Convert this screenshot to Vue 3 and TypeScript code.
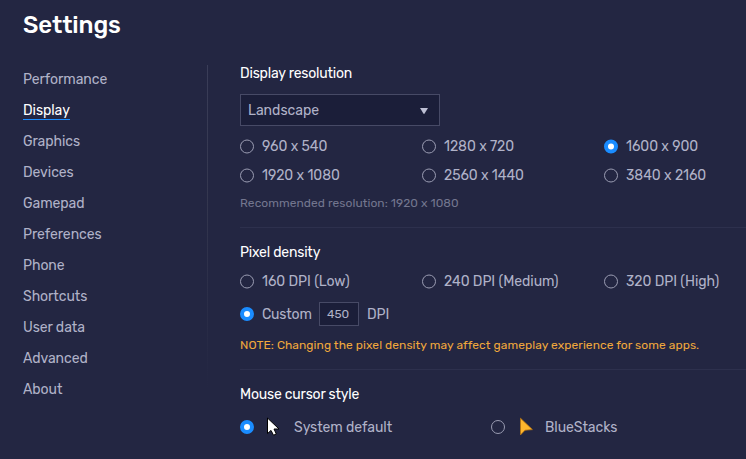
<script setup lang="ts">
interface Choice {
  label: string
  checked?: boolean
}

const active = 'Display'
const nav: string[] = [
  'Performance',
  'Display',
  'Graphics',
  'Devices',
  'Gamepad',
  'Preferences',
  'Phone',
  'Shortcuts',
  'User data',
  'Advanced',
  'About',
]

const resolutions: Choice[] = [
  { label: '960 x 540' },
  { label: '1280 x 720' },
  { label: '1600 x 900', checked: true },
  { label: '1920 x 1080' },
  { label: '2560 x 1440' },
  { label: '3840 x 2160' },
]

const densities: Choice[] = [
  { label: '160 DPI (Low)' },
  { label: '240 DPI (Medium)' },
  { label: '320 DPI (High)' },
]
</script>

<template>
  <div class="settings">
    <h1>Settings</h1>
    <div class="body">
      <nav>
        <div v-for="n in nav" :key="n" class="nav-row">
          <span :class="['nav-link', { active: n === active }]">{{ n }}</span>
        </div>
      </nav>
      <main>
        <section class="resolution">
          <h2>Display resolution</h2>
          <div class="select">
            <span class="text">Landscape</span>
            <svg width="8" height="6" viewBox="0 0 8 6"><path d="M0 0H8L4.6 5.6Q4 6.4 3.4 5.6Z" /></svg>
          </div>
          <div class="grid">
            <div v-for="r in resolutions" :key="r.label" class="option">
              <i :class="['radio', { on: r.checked }]"></i>
              <span>{{ r.label }}</span>
            </div>
          </div>
          <p class="hint">Recommended resolution: 1920 x 1080</p>
        </section>
        <section class="density">
          <h2>Pixel density</h2>
          <div class="grid">
            <div v-for="d in densities" :key="d.label" class="option">
              <i class="radio"></i>
              <span>{{ d.label }}</span>
            </div>
          </div>
          <div class="option custom">
            <i class="radio on"></i>
            <span class="custom-label text">Custom</span>
            <span class="field">450</span>
            <span class="text">DPI</span>
          </div>
          <p class="note">NOTE: Changing the pixel density may affect gameplay experience for some apps.</p>
        </section>
        <section class="mouse">
          <h2>Mouse cursor style</h2>
          <div class="cursors">
            <div class="option">
              <i class="radio on"></i>
              <svg class="cursor" width="14" height="20" viewBox="0 0 14 20">
                <path d="M.5 1V16.6L4 13.4L6.5 18.2L9.3 17L7 12H12Z" fill="#fff" stroke="#000" />
              </svg>
              <span>System default</span>
            </div>
            <div class="option">
              <i class="radio"></i>
              <svg class="cursor bs" width="14" height="20" viewBox="0 0 14 20">
                <path d="M.5 1.2V17.9L5 13.2L12.4 12.6Z" fill="#ffb62d" stroke="#b87512" stroke-width=".8" />
              </svg>
              <span>BlueStacks</span>
            </div>
          </div>
        </section>
      </main>
    </div>
  </div>
</template>

<style>
body { margin: 0; background: #232642; }
</style>

<style scoped>
.settings {
  box-sizing: border-box;
  width: 746px;
  height: 459px;
  overflow: hidden;
  background: #232642;
  color: #b0b2c8;
  font: 14px/20px Rubik, Roboto, sans-serif;
  letter-spacing: -0.06px;
  white-space: nowrap;
}
h1, h2, p { margin: 0; font-weight: 400; }
h1 {
  height: 64px;
  padding: 9px 0 0 23px;
  box-sizing: border-box;
  font-size: 24px;
  line-height: 32px;
  font-weight: 500;
  letter-spacing: -0.12px;
  color: #fff;
}
.body { display: flex; }
nav {
  box-sizing: border-box;
  width: 208px;
  height: 342px;
  padding-left: 23px;
  background: linear-gradient(#3a3d58, #34374f 40%, #232642) right 1px / 1px 322px no-repeat;
}
.nav-row { height: 31px; display: flex; align-items: center; }
.nav-link { line-height: 17px; padding-top: 1px; border-bottom: 1px solid transparent; }
.nav-link.active { color: #fff; border-color: #1a8cff; }
main { flex: 1; padding-left: 32px; min-width: 0; }
section { box-sizing: border-box; }
h2 { font-size: 14px; line-height: 20px; color: #fff; letter-spacing: -0.2px; }
.resolution { height: 164px; border-bottom: 1px solid #2d304d; }
.density { height: 142px; padding-top: 15px; border-bottom: 1px solid #2d304d; }
.mouse { padding-top: 15px; }
.text { padding-top: 2px; }
.select {
  box-sizing: border-box;
  display: flex;
  align-items: center;
  justify-content: space-between;
  width: 200px;
  height: 32px;
  margin-top: 10px;
  padding: 0 11px 0 7px;
  border: 1px solid #474a66;
  background: #1b1e39;
  letter-spacing: 0;
}
.select svg { margin-top: 2px; fill: #bdbfd4; }
.grid { display: grid; grid-template-columns: repeat(3, 182px); grid-auto-rows: 29px; }
.resolution .grid { margin-top: 6px; }
.density .grid { margin-top: 4px; }
.grid span { line-height: 19px; }
.option { display: flex; align-items: center; }
.radio {
  box-sizing: border-box;
  flex: none;
  width: 14px;
  height: 14px;
  margin-right: 8px;
  border: 1px solid #9a9cb2;
  border-radius: 50%;
}
.grid .radio { margin-bottom: 1px; transform: translateY(0.5px); }
.radio.on { border: 4px solid #1a8cff; background: #fff; }
.hint { margin-top: 3px; font-size: 12px; line-height: 20px; color: #73768f; letter-spacing: 0.06px; }
.custom { height: 36px; }
.field {
  box-sizing: border-box;
  width: 40px;
  height: 24px;
  margin: 0 8px;
  padding-left: 7px;
  border: 1px solid #474a66;
  background: #1b1e39;
  font-size: 12px;
  line-height: 22px;
}
.custom-label { width: 49px; letter-spacing: -0.2px; }
.note { margin-top: 3px; font-size: 12px; line-height: 20px; color: #f0a83c; letter-spacing: 0.065px; }
.cursors { display: grid; grid-template-columns: 251px 251px; margin-top: 12px; }
.cursors span { padding-top: 1px; line-height: 19px; }
.cursor { margin: 0 13px 0 5px; }
.cursor.bs { margin: 0 11px 0 7px; }
</style>
